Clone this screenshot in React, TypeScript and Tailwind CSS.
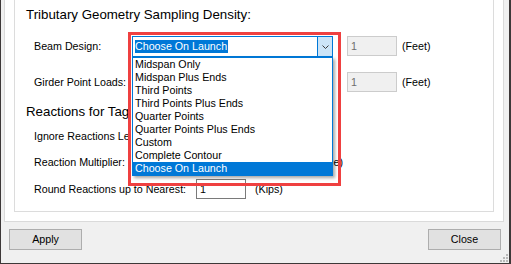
import React from "react";

const options = [
  "Midspan Only",
  "Midspan Plus Ends",
  "Third Points",
  "Third Points Plus Ends",
  "Quarter Points",
  "Quarter Points Plus Ends",
  "Custom",
  "Complete Contour",
  "Choose On Launch",
];

// small text box
const Field: React.FC<{ value: string; disabled?: boolean }> = ({ value, disabled }) => (
  <div
    className={`w-[50px] h-[20px] border flex items-center pl-[3px] leading-[13px] ${
      disabled
        ? "bg-[#f0f0f0] border-[#cccccc] text-[#6d6d6d]"
        : "bg-white border-[#7a7a7a] text-black"
    }`}
  >
    {value}
  </div>
);

const Chevron = () => (
  <svg width="7" height="4" viewBox="0 0 7 4">
    <path d="M0.5 0.5 L3.5 3.5 L6.5 0.5" fill="none" stroke="#3c3c3c" strokeWidth="1" />
  </svg>
);

const Combo: React.FC = () => (
  <div className="relative w-[201px] h-[21px]">
    <div className="h-full border border-[#0078d7] flex bg-white">
      <div className="flex-1 flex items-center pl-[2px]">
        <span className="bg-[#0078d7] text-white leading-[13px] pr-px">Choose On Launch</span>
      </div>
      <div className="w-[15px] flex items-center justify-center border-l border-[#0078d7] bg-[#cce4f7]">
        <Chevron />
      </div>
    </div>

    {/* dropdown list */}
    <ul className="absolute left-0 top-[21px] z-10 w-[201px] border border-[#0078d7] bg-white shadow-[2px_2px_3px_rgba(0,0,0,0.35)]">
      {options.map((o, i) => (
        <li
          key={o}
          className={`h-[13px] leading-[13px] pl-[2px] whitespace-nowrap ${
            i === options.length - 1 ? "bg-[#0078d7] text-white" : "text-black"
          }`}
        >
          {o}
        </li>
      ))}
    </ul>
    {/* highlight annotation */}
    <div className="absolute left-[-4px] top-[-4px] z-20 w-[213px] h-[154px] border-[3px] border-[#ef4040] pointer-events-none" />
  </div>
);

export default function App() {
  return (
    <div className="relative w-[511px] h-[264px] overflow-hidden bg-[#f0f0f0] border-l border-r-2 border-b border-[#3d3838] font-['Liberation_Sans',Arial,sans-serif] text-[10.7px] text-black">
      {/* tab page */}
      <div className="ml-[3px] w-[500px] h-[222px] bg-white border border-t-0 border-[#dadada] pl-[9px] pr-[9px]">
        {/* group box */}
        <div className="h-[212px] border border-t-0 border-[#dcdcdc] flex flex-col">
          <div className="mt-[7px] h-[16px] leading-[16px] pl-[11px] text-[13.3px]">
            Tributary Geometry Sampling Density:
          </div>

          <div className="mt-[13px] h-[21px] flex items-center pl-[19px]">
            <span className="w-[98px]">Beam Design:</span>
            <Combo />
            <div className="ml-[14px] self-start">
              <Field value="1" disabled />
            </div>
            <span className="ml-[5px]">(Feet)</span>
          </div>

          <div className="mt-[15px] h-[20px] flex items-center pl-[19px]">
            <span className="w-[98px]">Girder Point Loads:</span>
            <div className="w-[201px]" />
            <div className="ml-[14px]">
              <Field value="1" disabled />
            </div>
            <span className="ml-[5px]">(Feet)</span>
          </div>

          <div className="mt-[12px] h-[16px] leading-[16px] pl-[11px] text-[13.3px]">
            <div className="w-[102px] overflow-hidden whitespace-nowrap">Reactions for Tagged Members:</div>
          </div>

          <div className="mt-[6px] h-[20px] flex items-center pl-[19px]">
            <span className="w-[94px] overflow-hidden whitespace-nowrap">Ignore Reactions Less Than:</span>
          </div>

          <div className="mt-[6px] h-[20px] flex items-center pl-[19px]">
            <span className="w-[162px]">Reaction Multiplier:</span>
            <div className="w-[136px]" />
            <div className="w-[11px] overflow-hidden flex justify-end">
              <span className="whitespace-nowrap">(Times Value)</span>
            </div>
          </div>

          <div className="mt-[7px] h-[20px] flex items-center pl-[19px]">
            <span className="w-[162px]">Round Reactions up to Nearest:</span>
            <Field value="1" />
            <span className="ml-[9px]">(Kips)</span>
          </div>
        </div>
      </div>

      {/* buttons */}
      <div className="mt-[7px] flex justify-between pl-[8px] pr-[8px]">
        <button className="w-[73px] h-[21px] bg-[#e1e1e1] border border-[#adadad] text-[10.7px]">
          Apply
        </button>
        <button className="w-[73px] h-[21px] bg-[#e1e1e1] border border-[#adadad] text-[10.7px]">
          Close
        </button>
      </div>

      {/* size grip */}
      <svg className="absolute right-0 bottom-0" width="10" height="10" viewBox="0 0 10 10">
        <rect x="7" y="1" width="2" height="2" fill="#b8b8b8" />
        <rect x="4" y="4" width="2" height="2" fill="#b8b8b8" />
        <rect x="7" y="4" width="2" height="2" fill="#b8b8b8" />
        <rect x="1" y="7" width="2" height="2" fill="#b8b8b8" />
        <rect x="4" y="7" width="2" height="2" fill="#b8b8b8" />
        <rect x="7" y="7" width="2" height="2" fill="#b8b8b8" />
      </svg>
    </div>
  );
}
